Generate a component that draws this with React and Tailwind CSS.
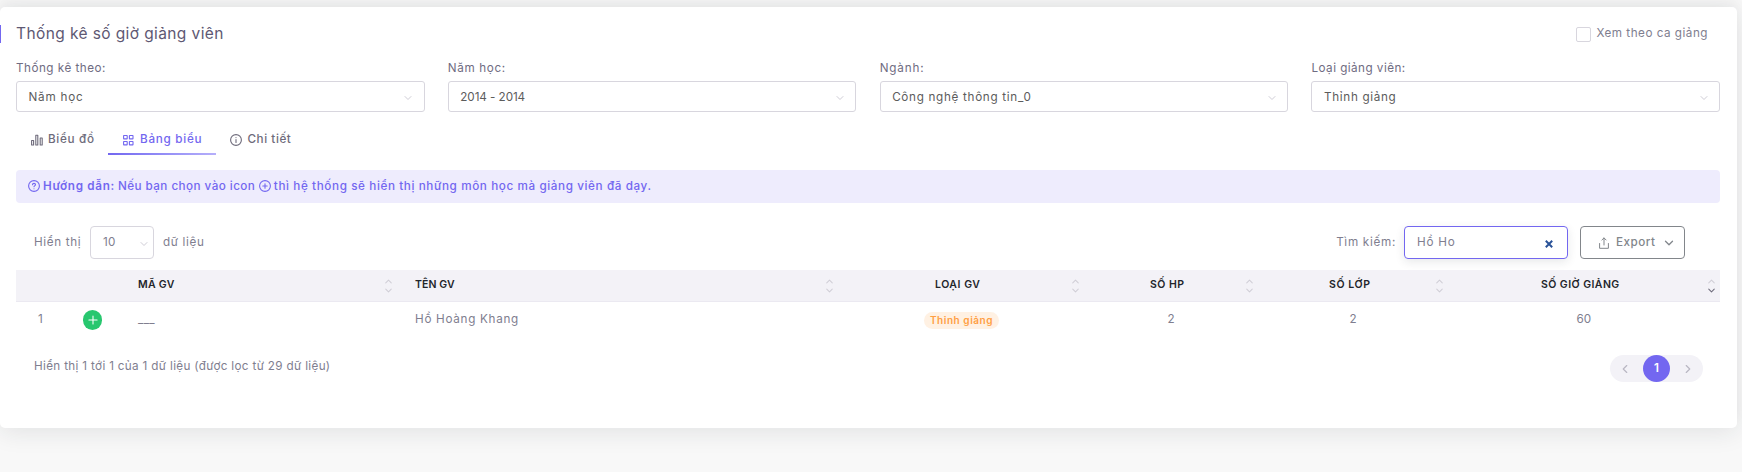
import { ChevronDown, ChevronUp, ChevronLeft, ChevronRight, Plus } from "lucide-react";

const Chevron = ({ className }) => <ChevronDown className={className} size={12} strokeWidth={2} />;

const BarsIcon = () => (
  <svg width="12" height="12" viewBox="0 0 12 12" fill="none" stroke="currentColor" strokeWidth="1.1" strokeLinejoin="round">
    <rect x="0.6" y="6.5" width="2" height="4.5" />
    <rect x="4.8" y="1.2" width="2" height="9.8" />
    <rect x="9.2" y="4" width="2" height="7" />
  </svg>
);

const GridIcon = () => (
  <svg width="11" height="12" viewBox="0 0 11 12" fill="none" stroke="currentColor" strokeWidth="1.1">
    <rect x="0.6" y="1.5" width="3.6" height="3.4" rx="0.3" />
    <rect x="6.4" y="1.5" width="3.6" height="3.4" rx="0.3" />
    <rect x="0.6" y="7.5" width="3.6" height="3.4" rx="0.3" />
    <rect x="6.4" y="7.5" width="3.6" height="3.4" rx="0.3" />
  </svg>
);

const CircleIcon = ({ children, className }) => (
  <svg className={className} width="12" height="12" viewBox="0 0 12 12" fill="none" stroke="currentColor" strokeWidth="1.1" strokeLinecap="round">
    <circle cx="6" cy="6" r="5.4" />
    {children}
  </svg>
);

const ExportIcon = () => (
  <svg width="10" height="12" viewBox="0 0 10 12" fill="none" stroke="currentColor" strokeWidth="1" strokeLinecap="round" strokeLinejoin="round">
    <path d="M0.6 6.5v4.8h8.8V6.5M5 8V1M2.9 3L5 0.9L7.1 3" />
  </svg>
);

function Field({ label, labelTracking, value, valueTracking }) {
  return (
    <div className="min-w-0">
      <div className={`h-[21px] text-[11.7px] leading-[17px] text-[#6f6c82] ${labelTracking}`}>{label}</div>
      <div className="flex h-[31px] items-center justify-between rounded-[3px] border border-[#d8d6de] pr-[9.5px] pl-[11.5px]">
        <span className={`pt-[2px] text-[11.7px] text-[#5c5c5c] ${valueTracking}`}>{value}</span>
        <Chevron className="mt-[3px] text-[#cfcdd6]" />
      </div>
    </div>
  );
}

function Head({ className, tracking, children, active }) {
  return (
    <div className={`flex items-center ${className}`}>
      <span className={`flex-1 pb-px text-[10.5px] font-semibold text-[#22252b] ${tracking}`}>{children}</span>
      <span className="flex w-3 flex-col items-center">
        <ChevronUp size={11} strokeWidth={2.2} className="text-[#d0ced6]" />
        <ChevronDown size={11} strokeWidth={2.2} className={active ? "-mt-[2px] text-[#6e6b7b]" : "-mt-[2px] text-[#d0ced6]"} />
      </span>
    </div>
  );
}

const cols = "grid grid-cols-[65px_56px_278px_425px_246px_174px_190px_270px]";

export default function App() {
  return (
    <div className="h-[472px] overflow-hidden bg-[#f8f8f8] pt-[7px] font-['Inter',sans-serif] text-[#807e8f]">
      <div className="h-[421px] w-[1737px] rounded-[5px] bg-white pt-[18px] shadow-[0_-8px_12px_0_rgba(34,41,47,0.03),0_4px_24px_0_rgba(34,41,47,0.1)]">
        <div className="flex h-[18px] items-center border-l border-[#7367f0] pr-[28px] pl-[15px]">
          <h1 className="flex-1 text-[15.5px] tracking-[0.4px] text-[#5e5873]">Thống kê số giờ giảng viên</h1>
          <span className="mr-[5px] h-[15px] w-[15px] rounded-[2px] border border-[#d8d6de]" />
          <span className="mr-px text-[11.7px] tracking-[0.5px]">Xem theo ca giảng</span>
        </div>

        <div className="mt-[17px] grid w-[1720px] grid-cols-4 gap-[23.3px] pl-4">
          <Field label="Thống kê theo:" labelTracking="tracking-[0.49px]" value="Năm học" valueTracking="tracking-[0.78px]" />
          <Field label="Năm học:" labelTracking="tracking-[0.64px]" value="2014 - 2014" valueTracking="tracking-[-0.07px]" />
          <Field label="Ngành:" labelTracking="tracking-[0.87px]" value="Công nghệ thông tin_0" valueTracking="tracking-[0.69px]" />
          <Field label="Loại giảng viên:" labelTracking="tracking-[0.46px]" value="Thỉnh giảng" valueTracking="tracking-[0.68px]" />
        </div>

        <div className="mt-[10px] ml-4 flex h-[33px] text-[11.7px] font-medium text-[#6e6b7b]">
          <div className="flex h-[33px] w-[92px] items-center pt-[2px] pl-[14.5px]">
            <BarsIcon />
            <span className="ml-[5.5px] tracking-[0.69px]">Biểu đồ</span>
          </div>
          <div className="flex h-[33px] w-[108px] flex-col text-[#7367f0]">
            <div className="flex h-[33px] items-center pt-[2px] pl-[15px]">
              <GridIcon />
              <span className="ml-[6px] tracking-[0.72px]">Bảng biểu</span>
            </div>
            <div className="-mt-[2px] h-[2px] shrink-0 bg-linear-to-r from-[#7367f0] to-[#b6affa]" />
          </div>
          <div className="flex h-[33px] items-center pt-[2px] pl-[14px]">
            <CircleIcon><path d="M6 5.5v3M6 3.5v.1" /></CircleIcon>
            <span className="ml-[5.5px] tracking-[0.55px]">Chi tiết</span>
          </div>
        </div>

        <div className="mt-[15px] ml-4 flex h-[33px] w-[1704px] items-center rounded-[4px] bg-[#eeecfd] pl-3 text-[11.7px] font-medium text-[#7367f0]">
          <CircleIcon className="mb-[2px]"><path d="M4.5 4.8c0-1.9 3-1.8 3-.1C7.5 5.6 6 5.7 6 6.8M6 8.7v.1" /></CircleIcon>
          <span className="ml-[3px] font-semibold tracking-[0.68px]">Hướng dẫn:</span>
          <span className="ml-[3px] tracking-[0.44px]">Nếu bạn chọn vào icon</span>
          <CircleIcon className="mb-[2px] ml-[4px]"><path d="M6 3.8v4.4M3.8 6h4.4" /></CircleIcon>
          <span className="ml-[2.5px] tracking-[0.6px]">thì hệ thống sẽ hiển thị những môn học mà giảng viên đã dạy.</span>
        </div>

        <div className="mt-[23px] flex h-[33px] items-center pr-[52px] pl-[34px] text-[11.7px]">
          <span className="w-[56px] tracking-[0.64px]">Hiển thị</span>
          <div className="flex h-[33px] w-[64px] items-center justify-between rounded-[4px] border border-[#d8d6de] pr-[3px] pl-3">
            <span className="tracking-[0.25px]">10</span>
            <Chevron className="mt-[2px] text-[#cfcdd6]" />
          </div>
          <span className="ml-[9px] flex-1 tracking-[0.64px]">dữ liệu</span>
          <span className="tracking-[0.7px]">Tìm kiếm:</span>
          <div className="ml-2 flex h-[33px] w-[164px] items-center justify-between rounded-[4px] border border-[#7367f0] pr-[14px] pl-3 shadow-[0_3px_10px_0_rgba(34,41,47,0.1)]">
            <span className="tracking-[0.76px]">Hồ Ho</span>
            <svg className="mt-[3px]" width="8" height="8" viewBox="0 0 8 8" stroke="#2a5298" strokeWidth="2">
              <path d="M0.8 0.8l6.4 6.4M7.2 0.8L0.8 7.2" />
            </svg>
          </div>
          <div className="ml-3 flex h-[33px] w-[105px] items-center rounded-[4px] border border-[#82868b] pl-[18px] font-medium text-[#82868b]">
            <ExportIcon />
            <span className="ml-[7px] tracking-[0.49px]">Export</span>
            <ChevronDown className="ml-[7px]" size={14} strokeWidth={2.2} />
          </div>
        </div>

        <div className={`mt-[11px] ml-4 h-8 w-[1704px] border-b border-[#ebe9f1] bg-[#f3f2f7] ${cols}`}>
          <div />
          <div />
          <Head className="pl-[1px] pr-[21px]" tracking="tracking-[0.28px]">MÃ GV</Head>
          <Head className="pr-[5px]" tracking="tracking-[0.09px]">TÊN GV</Head>
          <Head className="pl-[95px] pr-[5px]" tracking="tracking-[0.53px]">LOẠI GV</Head>
          <Head className="pl-[64px] pr-[5px]" tracking="tracking-[0.48px]">SỐ HP</Head>
          <Head className="pl-[69px] pr-[5px]" tracking="tracking-[0.6px]">SỐ LỚP</Head>
          <Head className="pl-[91px] pr-[3px]" tracking="tracking-[0.44px]" active>SỐ GIỜ GIẢNG</Head>
        </div>

        <div className={`ml-4 h-9 w-[1704px] items-center text-[11.7px] ${cols}`}>
          <span className="pl-[22px]">1</span>
          <span className="ml-[2px] flex h-5 w-[19px] items-center justify-center rounded-full bg-[#28c76f] text-white">
            <Plus size={14} strokeWidth={1.8} />
          </span>
          <span className="pl-px tracking-[0.3px]">___</span>
          <span className="tracking-[0.7px]">Hồ Hoàng Khang</span>
          <span className="mt-px ml-[84px] flex h-[17px] w-[75px] items-center justify-center rounded-full bg-[#fff1e3] pb-px text-[10px] font-semibold tracking-[0.55px] text-[#ff9f43]">Thỉnh giảng</span>
          <span className="pl-[81.5px]">2</span>
          <span className="pl-[89.5px]">2</span>
          <span className="pl-[126.5px]">60</span>
        </div>

        <div className="mt-[17px] ml-[34px] flex h-[27px] w-[1669px] justify-between text-[11.7px]">
          <span className="leading-[22px] tracking-[0.33px]">Hiển thị 1 tới 1 của 1 dữ liệu (được lọc từ 29 dữ liệu)</span>
          <div className="flex h-[27px] w-[93px] items-center rounded-full bg-[#f3f2f7] text-[#b9b7c3]">
            <ChevronLeft className="ml-[8px]" size={14} strokeWidth={2} />
            <span className="ml-[11px] flex h-[27px] w-[27px] items-center justify-center rounded-full bg-[#7367f0] font-semibold text-white">1</span>
            <ChevronRight className="ml-[11px]" size={14} strokeWidth={2} />
          </div>
        </div>
      </div>
    </div>
  );
}
